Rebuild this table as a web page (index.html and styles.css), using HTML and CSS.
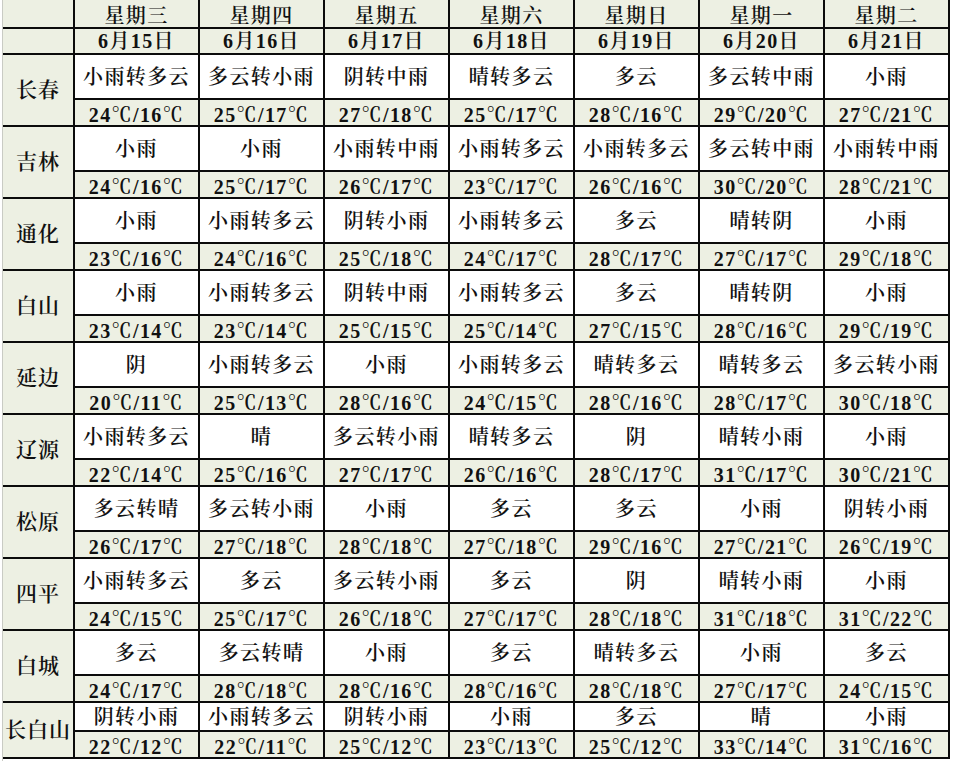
FILE: index.html
```html
<!DOCTYPE html>
<html lang="zh-CN">
<head>
<meta charset="utf-8">
<title>吉林省一周天气预报</title>
<link rel="stylesheet" href="styles.css">
</head>
<body>
<div class="sheet">
  <div class="grid">
    <div class="c hd"></div>
    <div class="c hd day">星期三</div>
    <div class="c hd day">星期四</div>
    <div class="c hd day">星期五</div>
    <div class="c hd day">星期六</div>
    <div class="c hd day">星期日</div>
    <div class="c hd day">星期一</div>
    <div class="c hd day">星期二</div>

    <div class="c hd"></div>
    <div class="c hd">6月15日</div>
    <div class="c hd">6月16日</div>
    <div class="c hd">6月17日</div>
    <div class="c hd">6月18日</div>
    <div class="c hd">6月19日</div>
    <div class="c hd">6月20日</div>
    <div class="c hd">6月21日</div>

    <div class="c city">长春</div>
    <div class="c w">小雨转多云</div><div class="c w">多云转小雨</div><div class="c w">阴转中雨</div><div class="c w">晴转多云</div><div class="c w">多云</div><div class="c w">多云转中雨</div><div class="c w">小雨</div>
    <div class="c t">24℃/16℃</div><div class="c t">25℃/17℃</div><div class="c t">27℃/18℃</div><div class="c t">25℃/17℃</div><div class="c t">28℃/16℃</div><div class="c t">29℃/20℃</div><div class="c t">27℃/21℃</div>

    <div class="c city">吉林</div>
    <div class="c w">小雨</div><div class="c w">小雨</div><div class="c w">小雨转中雨</div><div class="c w">小雨转多云</div><div class="c w">小雨转多云</div><div class="c w">多云转中雨</div><div class="c w">小雨转中雨</div>
    <div class="c t">24℃/16℃</div><div class="c t">25℃/17℃</div><div class="c t">26℃/17℃</div><div class="c t">23℃/17℃</div><div class="c t">26℃/16℃</div><div class="c t">30℃/20℃</div><div class="c t">28℃/21℃</div>

    <div class="c city">通化</div>
    <div class="c w">小雨</div><div class="c w">小雨转多云</div><div class="c w">阴转小雨</div><div class="c w">小雨转多云</div><div class="c w">多云</div><div class="c w">晴转阴</div><div class="c w">小雨</div>
    <div class="c t">23℃/16℃</div><div class="c t">24℃/16℃</div><div class="c t">25℃/18℃</div><div class="c t">24℃/17℃</div><div class="c t">28℃/17℃</div><div class="c t">27℃/17℃</div><div class="c t">29℃/18℃</div>

    <div class="c city">白山</div>
    <div class="c w">小雨</div><div class="c w">小雨转多云</div><div class="c w">阴转中雨</div><div class="c w">小雨转多云</div><div class="c w">多云</div><div class="c w">晴转阴</div><div class="c w">小雨</div>
    <div class="c t">23℃/14℃</div><div class="c t">23℃/14℃</div><div class="c t">25℃/15℃</div><div class="c t">25℃/14℃</div><div class="c t">27℃/15℃</div><div class="c t">28℃/16℃</div><div class="c t">29℃/19℃</div>

    <div class="c city">延边</div>
    <div class="c w">阴</div><div class="c w">小雨转多云</div><div class="c w">小雨</div><div class="c w">小雨转多云</div><div class="c w">晴转多云</div><div class="c w">晴转多云</div><div class="c w">多云转小雨</div>
    <div class="c t">20℃/11℃</div><div class="c t">25℃/13℃</div><div class="c t">28℃/16℃</div><div class="c t">24℃/15℃</div><div class="c t">28℃/16℃</div><div class="c t">28℃/17℃</div><div class="c t">30℃/18℃</div>

    <div class="c city">辽源</div>
    <div class="c w">小雨转多云</div><div class="c w">晴</div><div class="c w">多云转小雨</div><div class="c w">晴转多云</div><div class="c w">阴</div><div class="c w">晴转小雨</div><div class="c w">小雨</div>
    <div class="c t">22℃/14℃</div><div class="c t">25℃/16℃</div><div class="c t">27℃/17℃</div><div class="c t">26℃/16℃</div><div class="c t">28℃/17℃</div><div class="c t">31℃/17℃</div><div class="c t">30℃/21℃</div>

    <div class="c city">松原</div>
    <div class="c w">多云转晴</div><div class="c w">多云转小雨</div><div class="c w">小雨</div><div class="c w">多云</div><div class="c w">多云</div><div class="c w">小雨</div><div class="c w">阴转小雨</div>
    <div class="c t">26℃/17℃</div><div class="c t">27℃/18℃</div><div class="c t">28℃/18℃</div><div class="c t">27℃/18℃</div><div class="c t">29℃/16℃</div><div class="c t">27℃/21℃</div><div class="c t">26℃/19℃</div>

    <div class="c city">四平</div>
    <div class="c w">小雨转多云</div><div class="c w">多云</div><div class="c w">多云转小雨</div><div class="c w">多云</div><div class="c w">阴</div><div class="c w">晴转小雨</div><div class="c w">小雨</div>
    <div class="c t">24℃/15℃</div><div class="c t">25℃/17℃</div><div class="c t">26℃/18℃</div><div class="c t">27℃/17℃</div><div class="c t">28℃/18℃</div><div class="c t">31℃/18℃</div><div class="c t">31℃/22℃</div>

    <div class="c city">白城</div>
    <div class="c w">多云</div><div class="c w">多云转晴</div><div class="c w">小雨</div><div class="c w">多云</div><div class="c w">晴转多云</div><div class="c w">小雨</div><div class="c w">多云</div>
    <div class="c t">24℃/17℃</div><div class="c t">28℃/18℃</div><div class="c t">28℃/16℃</div><div class="c t">28℃/16℃</div><div class="c t">28℃/18℃</div><div class="c t">27℃/17℃</div><div class="c t">24℃/15℃</div>

    <div class="c city">长白山</div>
    <div class="c w">阴转小雨</div><div class="c w">小雨转多云</div><div class="c w">阴转小雨</div><div class="c w">小雨</div><div class="c w">多云</div><div class="c w">晴</div><div class="c w">小雨</div>
    <div class="c t">22℃/12℃</div><div class="c t">22℃/11℃</div><div class="c t">25℃/12℃</div><div class="c t">23℃/13℃</div><div class="c t">25℃/12℃</div><div class="c t">33℃/14℃</div><div class="c t">31℃/16℃</div>
  </div>
</div>
</body>
</html>
```

FILE: styles.css
```css
html, body {
  margin: 0;
  padding: 0;
  background: #ffffff;
}

.sheet {
  margin-left: 2px;
  border-left: 1px solid #c9cbc4;
  width: 950px;
  height: 761px;
  box-sizing: border-box;
}

.grid {
  display: grid;
  grid-template-columns: 70px repeat(7, 123px);
  grid-template-rows: 27px 24px repeat(9, 43px 25px) 27px 25px;
  gap: 2px;
  padding: 0 2px 2px 0;
  background: #0b0b0b;
  width: max-content;
  font-family: "Liberation Serif", "Noto Serif CJK SC", "Noto Sans CJK SC", serif;
  font-size: 20px;
  font-weight: 600;
  color: #111111;
}

.c {
  display: flex;
  align-items: center;
  justify-content: center;
  white-space: nowrap;
  letter-spacing: 1.4px;
  line-height: 1;
  overflow: hidden;
}

.hd {
  background: #edf0e3;
}

.day {
  align-items: flex-end;
  padding-bottom: 1px;
}

.city {
  grid-row: span 2;
  background: #edf0e3;
  font-size: 21px;
  letter-spacing: 1px;
}

.w {
  background: #ffffff;
  padding-top: 1px;
}

.t {
  background: #edf0e3;
  padding-top: 4px;
}
```
